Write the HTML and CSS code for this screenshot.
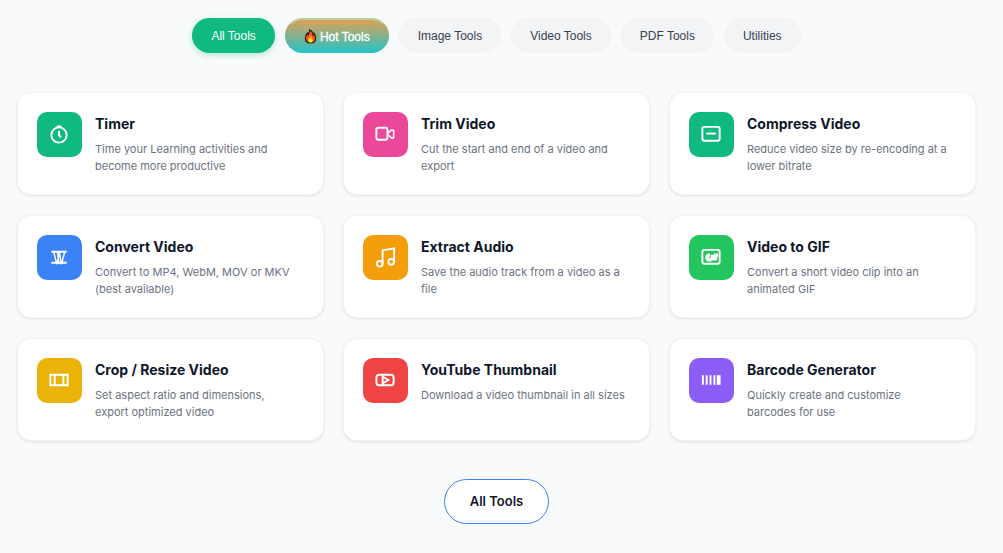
FILE: index.html
```
<!DOCTYPE html>
<html lang="en">
<head>
  <meta charset="UTF-8" />
  <meta name="viewport" content="width=device-width, initial-scale=1.0" />
  <title>Tools</title>
  <link rel="stylesheet" href="styles.css">
</head>
<body>
  <main class="page">
    <div class="filters">
      <button type="button" class="filter active">All Tools</button>
      <button type="button" class="filter hot">
        <svg class="flame" viewBox="0 0 14 16" aria-hidden="true">
          <path d="M6.2 1C6.700 3 4.600 4 4.500 6 4 5.700 3.700 5.300 3.600 4.500 2.200 6 1.500 8 1.500 10c0 3.300 2.300 5 5.500 5s5.500-1.900 5.500-5.200C12.500 7.500 11.500 6.300 11 5c-.3.700-.6 1-1.100 1.300C9.900 4 8.600 2 6.200 1z" fill="#f4511e" stroke="#2b1712" stroke-width="1.3"/>
          <path d="M7.200 6.500c.2 2-3.400 2.700-3.400 5.400 0 1.500 1.300 2.600 3.200 2.600s3.400-1.100 3.400-2.900c0-1-.4-1.600-.9-2.200-.2.500-.5.800-.9.900.1-1.500-.3-2.900-1.400-3.800z" fill="#ff9800"/>
          <path d="M7 10c-.5 1-1.700 1.400-1.700 2.700 0 1 .7 1.600 1.700 1.600s1.900-.6 1.900-1.700C8.900 11.500 7.800 11 7 10z" fill="#ffee58"/>
        </svg>
        Hot Tools
      </button>
      <button type="button" class="filter">Image Tools</button>
      <button type="button" class="filter">Video Tools</button>
      <button type="button" class="filter">PDF Tools</button>
      <button type="button" class="filter">Utilities</button>
    </div>

    <div class="tools-grid">
      <article class="tool-card">
        <div class="tool-icon green">
          <svg viewBox="0.5 1 24 24"><circle cx="12" cy="13.500" r="8"/><path d="M12 9v4.500l2 2.500M9.500 4.500h5"/></svg>
        </div>
        <div class="tool-text">
          <h3>Timer</h3>
          <p>Time your Learning activities and become more productive</p>
        </div>
      </article>

      <article class="tool-card">
        <div class="tool-icon pink">
          <svg viewBox="0.5 1 24 24"><rect x="3" y="6" width="11.500" height="12.500" rx="2"/><path d="M15 11.500l4-3.500q2 0 2 1.500v6q0 1.500-2 1.500l-4-4" stroke-width="1.600"/></svg>
        </div>
        <div class="tool-text">
          <h3>Trim Video</h3>
          <p>Cut the start and end of a video and export</p>
        </div>
      </article>

      <article class="tool-card">
        <div class="tool-icon green">
          <svg viewBox="0.5 1 24 24"><rect x="3" y="5" width="18" height="14.500" rx="2"/><path d="M7 12h10"/></svg>
        </div>
        <div class="tool-text">
          <h3>Compress Video</h3>
          <p>Reduce video size by re-encoding at a lower bitrate</p>
        </div>
      </article>

      <article class="tool-card">
        <div class="tool-icon blue">
          <svg viewBox="0.5 1 24 24"><path d="M4 7h16M4 18.500h16"/><path d="M6.500 7l3 13 3-12 2 12 3.500-13M10.500 8l1.500 12" stroke-width="1.500"/></svg>
        </div>
        <div class="tool-text">
          <h3>Convert Video</h3>
          <p>Convert to MP4, WebM, MOV or MKV (best available)</p>
        </div>
      </article>

      <article class="tool-card">
        <div class="tool-icon orange">
          <svg viewBox="0 0.5 24 24"><path d="M9 19V5l12-2v14"/><circle cx="6" cy="19" r="3"/><circle cx="18" cy="17" r="3"/></svg>
        </div>
        <div class="tool-text">
          <h3>Extract Audio</h3>
          <p>Save the audio track from a video as a file</p>
        </div>
      </article>

      <article class="tool-card">
        <div class="tool-icon lime">
          <svg viewBox="0.5 1 24 24"><rect x="3" y="5" width="18" height="14.500" rx="2"/><path d="M11 10.500H9.500C7 10.500 7 15.500 9.500 15.500H11v-2.500M13.500 10v6M16.500 16V10.500h3M16.500 13h2" stroke-width="3.200"/></svg>
        </div>
        <div class="tool-text">
          <h3>Video to GIF</h3>
          <p>Convert a short video clip into an animated GIF</p>
        </div>
      </article>

      <article class="tool-card">
        <div class="tool-icon yellow">
          <svg viewBox="0.5 1 24 24"><path d="M3 7h18v11H3zM7.500 7v11M16.500 7v11"/></svg>
        </div>
        <div class="tool-text">
          <h3>Crop / Resize Video</h3>
          <p>Set aspect ratio and dimensions,<br>export optimized video</p>
        </div>
      </article>

      <article class="tool-card">
        <div class="tool-icon red">
          <svg viewBox="0.5 1 24 24"><rect x="3" y="7" width="18" height="11" rx="3"/><path d="M9.500 7.500v10M9.500 9l6 3.500-6 3.500"/></svg>
        </div>
        <div class="tool-text">
          <h3>YouTube Thumbnail</h3>
          <p>Download a video thumbnail in all sizes</p>
        </div>
      </article>

      <article class="tool-card">
        <div class="tool-icon purple">
          <svg viewBox="0.5 1 24 24"><path d="M3.500 7.500v10M7.500 7.500v10M11.500 7.500v10M15.500 7.500v10"/><path d="M20 7.500v10" stroke-width="4"/></svg>
        </div>
        <div class="tool-text">
          <h3>Barcode Generator</h3>
          <p>Quickly create and customize<br>barcodes for use</p>
        </div>
      </article>
    </div>

    <a href="#" class="all-tools">All Tools</a>
  </main>
</body>
</html>
```
FILE: styles.css
```
* {
  box-sizing: border-box;
}

body {
  margin: 0;
  background-color: #f9fafc;
  font-family: Inter, sans-serif;
  color: #0f172a;
}

.page {
  display: flex;
  flex-direction: column;
  align-items: center;
  padding: 18px 27px 24px 17px;
}

.filters {
  display: flex;
  flex-wrap: wrap;
  justify-content: center;
  gap: 10px;
  margin-bottom: 39px;
}

.filter {
  display: flex;
  align-items: center;
  gap: 3px;
  height: 35px;
  padding: 0 19px;
  border: none;
  border-radius: 18px;
  background-color: #f3f4f6;
  color: #374151;
  font-family: "Liberation Sans", Arial, sans-serif;
  font-size: 12px;
  cursor: pointer;
}

.filter.active {
  background-color: #10b981;
  color: #fff;
  box-shadow: 0 2px 6px rgba(16, 185, 129, 0.3);
}

.filter.hot {
  padding: 2px 17px 0;
  border: 2px solid transparent;
  border-top-color: #b9cf9a;
  background: linear-gradient(#e99f50, #22c3c9) border-box;
  color: #fff;
  -webkit-text-stroke: 0.3px #fff;
}

.flame {
  width: 13px;
  height: 15px;
}

.tools-grid {
  display: grid;
  grid-template-columns: repeat(3, 1fr);
  gap: 20px 19px;
  width: 100%;
  margin-bottom: 38px;
}

.tool-card {
  display: flex;
  align-items: flex-start;
  gap: 13px;
  padding: 19px;
  border: 1px solid #f3f4f6;
  border-radius: 14px;
  background-color: #fff;
  box-shadow: 0 1px 3px rgba(0, 0, 0, 0.1);
}

.tool-icon {
  display: flex;
  align-items: center;
  justify-content: center;
  flex-shrink: 0;
  width: 45px;
  height: 45px;
  border-radius: 10px;
}

.tool-icon svg {
  width: 23px;
  height: 23px;
  fill: none;
  stroke: #fff;
  stroke-width: 2;
}

.green { background-color: #10b981; }
.pink { background-color: #ec4899; }
.blue { background-color: #3b82f6; }
.orange { background-color: #f59e0b; }
.lime { background-color: #22c55e; }
.yellow { background-color: #eab308; }
.red { background-color: #ef4444; }
.purple { background-color: #8b5cf6; }

.tool-text h3 {
  margin: 0 0 5px;
  font-size: 14px;
  font-weight: 700;
  line-height: 24px;
}

.tool-text p {
  margin: 0;
  color: #6b7280;
  font-size: 11px;
  line-height: 17px;
}

.all-tools {
  padding: 12px 25px;
  border: 1px solid #3b82f6;
  border-radius: 23px;
  background-color: #fff;
  color: #0f172a;
  font-size: 13px;
  font-weight: 600;
  line-height: 19px;
  text-decoration: none;
}
```
